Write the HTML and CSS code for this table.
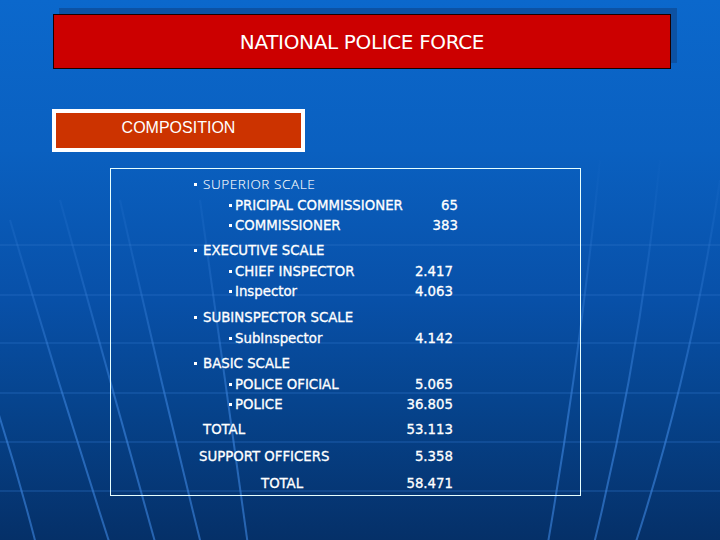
FILE: index.html
```html
<!DOCTYPE html>
<html>
<head>
<meta charset="utf-8">
<link rel="stylesheet" href="styles.css">
</head>
<body>
<div class="slide">
  <svg class="bg" width="720" height="540" viewBox="0 0 720 540">
    <defs>
      <linearGradient id="fade" gradientUnits="userSpaceOnUse" x1="0" y1="150" x2="0" y2="420">
        <stop offset="0" stop-color="#3d86e0" stop-opacity="0"/>
        <stop offset="1" stop-color="#3d86e0" stop-opacity="0.6"/>
      </linearGradient>
    </defs>
    <g class="hl">
      <line x1="0" y1="245" x2="720" y2="245"/>
      <line x1="0" y1="295" x2="720" y2="295"/>
      <line x1="0" y1="343" x2="720" y2="343"/>
      <line x1="0" y1="393" x2="720" y2="393"/>
      <line x1="0" y1="442" x2="720" y2="442"/>
      <line x1="0" y1="491" x2="720" y2="491"/>
    </g>
    <g class="ml" stroke="url(#fade)">
      <path d="M -30 330 Q 10 440 40 560"/>
      <path d="M 10 220 Q 60 390 115 560"/>
      <path d="M 60 200 Q 110 380 160 560"/>
      <path d="M 120 200 Q 160 380 205 560"/>
      <path d="M 200 200 Q 225 380 250 560"/>
      <path d="M 600 160 Q 580 360 545 560"/>
      <path d="M 660 160 Q 640 360 590 560"/>
      <path d="M 720 180 Q 690 380 630 560"/>
    </g>
  </svg>
  <div class="content">
    <div class="title"><span>NATIONAL POLICE FORCE</span></div>
    <div class="comp">COMPOSITION</div>
    <div class="panel">
      <div class="section">
        <div class="row head thin"><span class="bul"></span>SUPERIOR SCALE</div>
        <div class="row item"><span class="lbl"><span class="bul small"></span>PRICIPAL COMMISSIONER</span><span class="num shift">65</span></div>
        <div class="row item"><span class="lbl"><span class="bul small"></span>COMMISSIONER</span><span class="num shift">383</span></div>
      </div>
      <div class="section">
        <div class="row head"><span class="bul"></span>EXECUTIVE SCALE</div>
        <div class="row item"><span class="lbl"><span class="bul small"></span>CHIEF INSPECTOR</span><span class="num">2.417</span></div>
        <div class="row item"><span class="lbl"><span class="bul small"></span>Inspector</span><span class="num">4.063</span></div>
      </div>
      <div class="section gap6">
        <div class="row head"><span class="bul"></span>SUBINSPECTOR SCALE</div>
        <div class="row item"><span class="lbl"><span class="bul small"></span>SubInspector</span><span class="num">4.142</span></div>
      </div>
      <div class="section">
        <div class="row head"><span class="bul"></span>BASIC SCALE</div>
        <div class="row item"><span class="lbl"><span class="bul small"></span>POLICE OFICIAL</span><span class="num">5.065</span></div>
        <div class="row item"><span class="lbl"><span class="bul small"></span>POLICE</span><span class="num">36.805</span></div>
      </div>
      <div class="row total t1"><span class="lbl">TOTAL</span><span class="num">53.113</span></div>
      <div class="row total t2"><span class="lbl">SUPPORT OFFICERS</span><span class="num">5.358</span></div>
      <div class="row total t3"><span class="lbl">TOTAL</span><span class="num">58.471</span></div>
    </div>
  </div>
</div>
</body>
</html>
```

FILE: styles.css
```css
html, body {
  margin: 0;
  padding: 0;
}
body {
  width: 720px;
  height: 540px;
  overflow: hidden;
}
.slide {
  position: relative;
  width: 720px;
  height: 540px;
  background: linear-gradient(to bottom, #0b68cc 0px, #0a60c0 150px, #0850a8 300px, #06448e 400px, #053068 540px);
  font-family: "DejaVu Sans Condensed", "DejaVu Sans", sans-serif;
  color: #ffffff;
}
.bg {
  position: absolute;
  left: 0;
  top: 0;
}
.hl line {
  stroke: #2a6fc8;
  stroke-opacity: 0.3;
  stroke-width: 2;
}
.ml path {
  fill: none;
  stroke-width: 2;
}
.content {
  position: relative;
  display: flex;
  flex-direction: column;
  align-items: flex-start;
  padding-top: 14px;
}
.title {
  margin-left: 53px;
  width: 616px;
  height: 53px;
  border: 1px solid #1a0000;
  background: #cc0000;
  box-shadow: 6px -6px 0 #0c52a4;
  display: flex;
  align-items: center;
  justify-content: center;
  font-family: "DejaVu Sans", sans-serif;
  font-size: 20px;
  letter-spacing: -0.35px;
}
.comp {
  margin-top: 40px;
  margin-left: 52px;
  width: 245px;
  height: 29px;
  border: 4px solid #ffffff;
  background: #cc3300;
  padding-bottom: 6px;
  display: flex;
  align-items: center;
  justify-content: center;
  font-family: "Liberation Sans", Arial, sans-serif;
  font-size: 16px;
}
.panel {
  margin-top: 16px;
  margin-left: 110px;
  width: 386px;
  height: 321px;
  border: 1px solid #e6ffff;
  padding: 5px 0 0 83px;
  display: flex;
  flex-direction: column;
  gap: 5px;
  font-size: 14.8px;
  -webkit-text-stroke: 0.3px #ffffff;
}
.section {
  display: flex;
  flex-direction: column;
}
.section.gap6 {
  margin-top: 1px;
}
.row {
  width: 259px;
  height: 20px;
  line-height: 20px;
  display: flex;
  align-items: center;
  justify-content: space-between;
  white-space: nowrap;
}
.head {
  justify-content: flex-start;
  margin-bottom: 1px;
}
.thin {
  font-family: "Open Sans", sans-serif;
  font-weight: 300;
  font-size: 13.5px;
  letter-spacing: 0.6px;
  -webkit-text-stroke: 0.1px #ffffff;
}
.bul {
  display: inline-block;
  width: 3px;
  height: 3px;
  background: #ffffff;
  margin-right: 6px;
  vertical-align: middle;
}
.bul.small {
  margin-right: 3px;
}
.item .lbl {
  margin-left: 35px;
  display: flex;
  align-items: center;
}
.num {
  text-align: right;
}
.num.shift {
  margin-right: -5px;
}
.t1 .lbl {
  margin-left: 9px;
}
.t2 {
  margin-top: 2px;
}
.t2 .lbl {
  margin-left: 5px;
}
.t3 {
  margin-top: 2px;
}
.t3 .lbl {
  margin-left: 67px;
}
```
